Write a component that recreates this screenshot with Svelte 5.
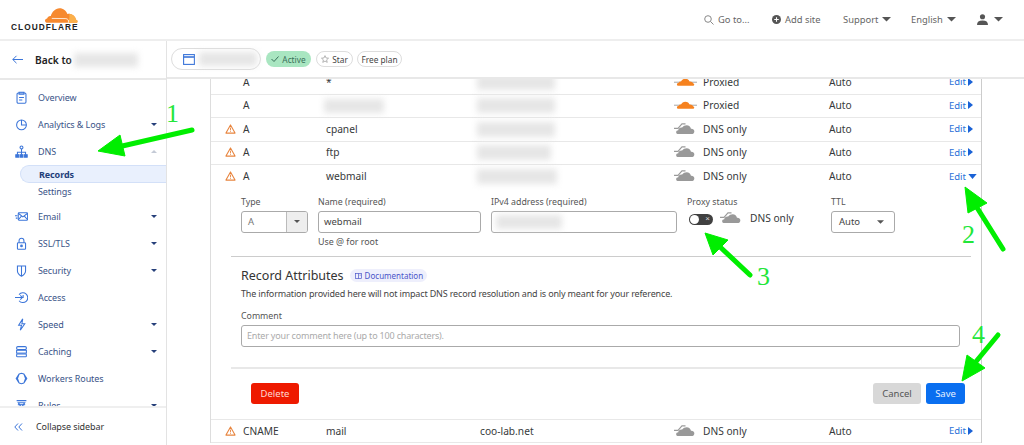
<script>
  const nav = [
    { label: 'Overview', icon: 'overview' },
    { label: 'Analytics & Logs', icon: 'analytics', caret: true },
    { label: 'DNS', icon: 'dns', open: true, sub: ['Records', 'Settings'] },
    { label: 'Email', icon: 'email', caret: true },
    { label: 'SSL/TLS', icon: 'lock', caret: true },
    { label: 'Security', icon: 'shield', caret: true },
    { label: 'Access', icon: 'access' },
    { label: 'Speed', icon: 'speed', caret: true },
    { label: 'Caching', icon: 'caching', caret: true },
    { label: 'Workers Routes', icon: 'workers' },
    { label: 'Rules', icon: 'rules', caret: true }
  ];
  const before = [
    { warn: false, type: 'A', name: '*', proxied: true, c: 78 },
    { warn: false, type: 'A', name: null, proxied: true, c: 78 },
    { warn: true, type: 'A', name: 'cpanel', proxied: false, c: 78 },
    { warn: true, type: 'A', name: 'ftp', proxied: false, c: 74 },
    { warn: true, type: 'A', name: 'webmail', proxied: false, c: 80, open: true }
  ];
  const cloudPath = 'M5 16c-1.4 0-2.6-.9-2.6-2.2 0-1.2 1-2.2 2.4-2.2.3-2.2 2.4-3.4 4.4-2.9C10.600 6.800 12.400 6 14.300 6c2.500 0 4.600 1.700 4.900 4 2-.2 3.800 1 3.800 3 0 1.700-1.400 3-3.300 3z';
</script>

{#snippet cloud(on)}
  <svg class="cloud" viewBox="0 0 26 18" width="23" height="16">
    {#if on}
      <path d="M0 11.500h26" stroke="#9a9a9a" stroke-width="1" />
      <path d="M5 15.500c-1 0-1.700-.7-1.700-1.500s.7-1.500 1.800-1.500c.4-1.300 1.600-2 2.800-1.700C8.800 9 10.600 7.500 12.800 7.500c2.400 0 4.300 1.500 4.700 3.300 1.900-.3 3.600.6 4 2 .9.200 1.400.7 1.400 1.300 0 .8-.7 1.400-1.700 1.400z" fill="#f6821f" />
    {:else}
      <path d="M0 10.500h4.500L9 5.500h4" fill="none" stroke="#9a9a9a" stroke-width="1.300" />
      <path d={cloudPath} fill="#999" transform="translate(0 1)" />
    {/if}
  </svg>
{/snippet}

{#snippet warn()}
  <svg viewBox="0 0 12 11" width="11" height="10">
    <path d="M6 1 11 10H1z" fill="#fff" stroke="#e8853f" stroke-width="1.200" stroke-linejoin="round" />
    <path d="M6 4v3M6 8v.8" stroke="#e8853f" stroke-width="1" />
  </svg>
{/snippet}

{#snippet caretDown(w, color)}
  <svg class="caret" viewBox="0 0 10 5" width={w} height={w / 2}><path d="M0 0h10L5 5z" fill={color} /></svg>
{/snippet}

{#snippet navIcon(name)}
  <svg viewBox="0 0 16 16" width="13" height="13" fill="none" stroke="#3b75d9" stroke-width="1.300">
    {#if name === 'overview'}
      <rect x="2.500" y="2.500" width="11" height="12.500" rx="1.500" /><path d="M5 1.500h6v2.500H5zM5 8h6M5 11h4" />
    {:else if name === 'analytics'}
      <circle cx="8" cy="8.500" r="6" /><path d="M8 2.500v6H14" />
    {:else if name === 'dns'}
      <circle cx="8" cy="3" r="1.800" /><path d="M8 5v4M3 12v-3h10v3M8 9v3" /><rect x="1" y="12" width="3.500" height="3" fill="#3b75d9" /><rect x="6.200" y="12" width="3.500" height="3" fill="#3b75d9" /><rect x="11.500" y="12" width="3.500" height="3" fill="#3b75d9" />
    {:else if name === 'email'}
      <rect x="4" y="3.500" width="11.500" height="9" rx="1" /><path d="M4 4l5.700 4.500L15.500 4M4 12l4-4.500M15.500 12l-4-4.500M0 7h3M1 10h2" />
    {:else if name === 'lock'}
      <rect x="3" y="7" width="10" height="8" rx="1" /><path d="M5 7V4.500a3 3 0 0 1 6 0V7" /><circle cx="8" cy="11" r="1" fill="#3b75d9" />
    {:else if name === 'shield'}
      <path d="M3 2.500h10v6c0 3-2.500 5-5 6.500-2.500-1.500-5-3.500-5-6.500zM8 2.500V15" />
    {:else if name === 'access'}
      <path d="M5 4.500a6 6 0 1 1 0 7.500M0 8h9M6.500 5.500 9 8l-2.500 2.500M10 5v3.500" />
    {:else if name === 'speed'}
      <path d="M9.500 1 4.500 9H8l-1.500 6 5.500-8H8.500z" />
    {:else if name === 'caching'}
      <rect x="2" y="2" width="12" height="3.500" rx="1.500" /><rect x="2" y="6.500" width="12" height="3.500" /><rect x="2" y="11" width="12" height="3.500" rx="1" />
    {:else if name === 'workers'}
      <path d="M5 2.500 1.500 8 5 13.500M11 2.500 14.500 8 11 13.500M5 2.500 8 1.500 11 2.500M5 13.500 8 14.500 11 13.500M5 2.500 3 8 5 13.500M11 2.500 13 8 11 13.500" />
    {:else}
      <path d="M2 2h12M4 4.500h8L9 9v4.500H7V9z" /><path d="M3.500 7h9" />
    {/if}
  </svg>
{/snippet}

<div class="page">
  <header class="top">
    <div class="logo">
      <svg viewBox="0 0 34 17" width="33" height="17">
        <path d="M2.500 16C1 16 0 15 0 13.800c0-1.300 1-2.300 2.200-2.300.5-1.800 2-2.800 3.800-2.500C7 5 10.500 1 15 1c3.800 0 7 2.500 8 6 .8-.3 1.600-.3 2.300-.2 3.700.4 6 2.800 6.700 6.200.8.200 1.500.8 1.500 1.700 0 .7-.5 1.300-1.400 1.300z" fill="#f6892f" />
        <path d="M25 6.800c3.700.4 6.300 2.900 7 6.200.8.200 1.500.8 1.500 1.700 0 .7-.5 1.300-1.400 1.300H24c.8-2.500 1.500-5.500 1-9.200z" fill="#fbb04b" />
        <path d="M24 16c.8-2.500-.3-4-2.500-4.300L7 11.500" fill="none" stroke="#fff" stroke-width=".8" />
      </svg>
      <span>CLOUDFLARE</span>
    </div>
    <nav class="tools">
      <span class="tool goto">
        <svg viewBox="0 0 10 10" width="10" height="10" fill="none" stroke="#888" stroke-width="1"><circle cx="4" cy="4" r="3.300" /><path d="M6.500 6.500 9.500 9.500" /></svg>
        Go to...
      </span>
      <span class="tool add">
        <svg viewBox="0 0 10 10" width="9" height="9"><circle cx="5" cy="5" r="5" fill="#555" /><path d="M5 2.500v5M2.500 5h5" stroke="#fff" stroke-width="1.200" /></svg>
        Add site
      </span>
      <span class="tool support">Support {@render caretDown(9, '#555')}</span>
      <span class="tool english">English {@render caretDown(9, '#555')}</span>
      <span class="tool user">
        <svg viewBox="0 0 12 12" width="11" height="11" fill="#555"><circle cx="6" cy="3" r="2.800" /><path d="M0 12c0-3.500 2-5 6-5s6 1.500 6 5z" /></svg>
        {@render caretDown(9, '#555')}
      </span>
    </nav>
  </header>

  <div class="body">
    <aside class="side">
      <div class="back">
        <svg viewBox="0 0 11 9" width="11" height="9" fill="none" stroke="#3b75d9" stroke-width="1"><path d="M11 4.500H.8M4.500 .8.800 4.500l3.700 3.700" /></svg>
        <b>Back to</b>
        <i class="blur" style="width: 64px; height: 14px"></i>
      </div>
      <div class="items">
        {#each nav as item}
          <div class="item">
            <span class="nav-icon">{@render navIcon(item.icon)}</span>
            <span>{item.label}</span>
            {#if item.caret}
              <svg class="nav-caret" viewBox="0 0 10 5" width="6" height="3"><path d="M0 0h10L5 5z" fill="#27407a" /></svg>
            {:else if item.open}
              <svg class="nav-caret" viewBox="0 0 10 5" width="6" height="3"><path d="M0 5h10L5 0z" fill="#c4cad6" /></svg>
            {/if}
          </div>
          {#if item.sub}
            <div class="sub current">{item.sub[0]}</div>
            <div class="sub">{item.sub[1]}</div>
          {/if}
        {/each}
      </div>
      <div class="collapse">
        <svg viewBox="0 0 9 8" width="9" height="8" fill="none" stroke="#3b75d9" stroke-width="1"><path d="M4 .5.800 4 4 7.500M8 .5 4.800 4 8 7.500" /></svg>
        Collapse sidebar
      </div>
    </aside>

    <main class="main">
      <div class="zonebar">
        <div class="zone">
          <svg viewBox="0 0 12 11" width="12" height="11" fill="none" stroke="#3b75d9" stroke-width="1.100"><rect x=".6" y=".6" width="10.800" height="9.800" /><path d="M.6 3h10.800" stroke-width="1.600" /></svg>
          <i class="blur" style="width: 58px; height: 14px"></i>
        </div>
        <span class="badge active">
          <svg viewBox="0 0 8 6" width="8" height="6" fill="none" stroke="#39705a" stroke-width="1"><path d="M.5 3 3 5.500 7.500 .5" /></svg>
          Active
        </span>
        <span class="badge star">
          <svg viewBox="0 0 10 10" width="8" height="8" fill="none" stroke="#999" stroke-width=".9"><path d="M5 .8 6.300 3.700 9.400 4 7 6.100 7.800 9.200 5 7.600 2.200 9.200 3 6.100.6 4 3.700 3.700z" /></svg>
          Star
        </span>
        <span class="badge plan">Free plan</span>
      </div>

      <div class="scroll">
        <div class="table">
          {#each before as r}
            <div class="row" class:open={r.open}>
              <span class="warn">{#if r.warn}{@render warn()}{/if}</span>
              <span>{r.type}</span>
              <span>{#if r.name}{r.name}{:else}<i class="blur name-blur" style="width: 60px; height: 14px"></i>{/if}</span>
              <span><i class="blur val-blur" style="width: {r.c}px; height: 15px"></i></span>
              <span class="cl">{@render cloud(r.proxied)}</span>
              <span>{r.proxied ? 'Proxied' : 'DNS only'}</span>
              <span>Auto</span>
              <span class="edit">
                Edit
                {#if r.open}
                  <svg viewBox="0 0 10 6" width="9" height="5"><path d="M0 0h10L5 6z" fill="#1a62d6" /></svg>
                {:else}
                  <svg viewBox="0 0 5 8" width="5" height="8"><path d="M0 0l5 4-5 4z" fill="#1a62d6" /></svg>
                {/if}
              </span>
            </div>
          {/each}

          <section class="editor">
            <div class="fields">
              <div class="f-type">
                <label for="t">Type</label>
                <div class="select" id="t"><span>A</span><b><svg viewBox="0 0 10 5" width="6" height="3"><path d="M0 0h10L5 5z" fill="#555" /></svg></b></div>
              </div>
              <div class="f-name">
                <label for="n">Name (required)</label>
                <div class="input" id="n">webmail</div>
                <small>Use @ for root</small>
              </div>
              <div class="f-ip">
                <label for="i">IPv4 address (required)</label>
                <div class="input" id="i"><i class="blur" style="width: 66px; height: 14px"></i></div>
              </div>
              <div class="f-proxy">
                <span class="lab">Proxy status</span>
                <div class="proxy-row">
                  <span class="toggle"><span class="knob"></span><span class="x">×</span></span>
                  <span class="cl2">{@render cloud(false)}</span>
                  <span class="only">DNS only</span>
                </div>
              </div>
              <div class="f-ttl">
                <label for="ttl">TTL</label>
                <div class="input ttl" id="ttl"><span>Auto</span><svg viewBox="0 0 10 5" width="7" height="4"><path d="M0 0h10L5 5z" fill="#555" /></svg></div>
              </div>
            </div>

            <hr class="rule" />

            <div class="attrs">
              <div class="attr-head">
                <h2>Record Attributes</h2>
                <span class="doc">
                  <svg viewBox="0 0 8 7" width="7" height="6" fill="none" stroke="#4a55c9" stroke-width=".8"><rect x=".5" y=".5" width="7" height="6" /><path d="M4 .5v6M5.300 2.500h1.300" /></svg>
                  Documentation
                </span>
              </div>
              <p>The information provided here will not impact DNS record resolution and is only meant for your reference.</p>
              <label for="c">Comment</label>
              <div class="input comment" id="c">Enter your comment here (up to 100 characters).</div>
            </div>

            <hr class="rule thick" />

            <div class="actions">
              <button class="btn del">Delete</button>
              <span class="grow"></span>
              <button class="btn cancel">Cancel</button>
              <button class="btn save">Save</button>
            </div>
          </section>

          <div class="row last">
            <span class="warn">{@render warn()}</span>
            <span>CNAME</span>
            <span>mail</span>
            <span>coo-lab.net</span>
            <span class="cl">{@render cloud(false)}</span>
            <span>DNS only</span>
            <span>Auto</span>
            <span class="edit">Edit <svg viewBox="0 0 5 8" width="5" height="8"><path d="M0 0l5 4-5 4z" fill="#1a62d6" /></svg></span>
          </div>
        </div>
      </div>
    </main>
  </div>

  <svg class="notes" viewBox="0 0 1024 445" width="1024" height="445">
    <g fill="#00ee00" stroke="#00ee00">
      <path d="M192 130 118 147" stroke-width="5" stroke-linecap="round" />
      <path d="M98 151 120 135 125 156z" />
      <path d="M1003 249 976 206" stroke-width="5" stroke-linecap="round" />
      <path d="M965 187 987 203 968 213z" />
      <path d="M750 275 718 245" stroke-width="5" stroke-linecap="round" />
      <path d="M705 233 728 240 713 255z" />
      <path d="M998 335 974 364" stroke-width="5" stroke-linecap="round" />
      <path d="M962 381 967 355 985 368z" />
    </g>
    <g class="num" fill="#22e63a">
      <text x="166" y="122">1</text>
      <text x="962" y="243">2</text>
      <text x="757" y="285">3</text>
      <text x="972" y="343">4</text>
    </g>
  </svg>
</div>

<style>
  :global(body) { margin: 0; background: #fff; }
  .page { position: relative; width: 1024px; height: 445px; overflow: hidden; font-family: "Noto Sans", sans-serif; font-size: 10.500px; color: #36393a; background: #fff; }
  .blur { display: inline-block; background: #e6e6e6; filter: blur(3px); vertical-align: middle; }

  .top { height: 39px; display: flex; align-items: center; justify-content: space-between; border-bottom: 2px solid #eeeeee; }
  .logo { position: relative; width: 90px; height: 39px; }
  .logo svg { position: absolute; left: 45px; top: 7px; }
  .logo span { position: absolute; left: 11px; top: 22px; font: 700 8.300px/10px "Liberation Sans", sans-serif; letter-spacing: 1.050px; color: #222; }
  .tools { display: flex; align-items: center; font-size: 9.400px; color: #666; }
  .tool { display: flex; align-items: center; gap: 4px; }
  .goto { width: 68px; }
  .add { width: 71px; }
  .support { width: 68px; gap: 4px; }
  .english { width: 66px; gap: 4px; }
  .user { width: 47px; gap: 6px; }

  .body { display: grid; grid-template-columns: 167px 1fr; height: 404px; }
  .side { display: flex; flex-direction: column; border-right: 1px solid #e3e3e3; height: 404px; min-width: 0; font-size: 9px; letter-spacing: -0.1px; }
  .back { height: 37px; flex: none; display: flex; align-items: center; padding-left: 12px; border-bottom: 2px solid #e8e8e8; }
  .back b { margin: 0 2px 0 12px; font-size: 10.200px; font-weight: 600; color: #222; white-space: nowrap; letter-spacing: 0; }
  .items { flex: 1; overflow: hidden; padding-top: 3.500px; min-height: 0; }
  .item { position: relative; height: 27px; display: flex; align-items: center; color: #3a5488; }
  .nav-icon { width: 38px; padding-left: 15px; box-sizing: border-box; display: flex; flex: none; }
  .nav-caret { position: absolute; left: 151px; top: 12px; }
  .sub { height: 18px; line-height: 17px; padding-left: 18px; margin-left: 20px; color: #3a5488; box-sizing: border-box; }
  .current { margin-top: 0; font-weight: 700; color: #1f3f7a; background: #e9f0fd; border: 1px solid #d3e0f8; border-right: 0; border-radius: 9px 0 0 9px; }
  .sub:not(.current) { margin-bottom: 2.500px; }
  .collapse { flex: none; height: 37px; border-top: 2px solid #efefef; display: flex; align-items: center; gap: 13px; padding-left: 14px; color: #333; }

  .main { min-width: 0; }
  .zonebar { height: 38px; box-sizing: border-box; border-bottom: 2px solid #e8e8e8; display: flex; align-items: center; padding: 0 0 0 4px; }
  .zone { width: 90px; height: 22px; box-sizing: border-box; border: 1px solid #ddd; border-radius: 11px; display: flex; align-items: center; gap: 4px; padding-left: 11px; margin-right: 5px; }
  .badge { height: 16px; box-sizing: border-box; border-radius: 8px; display: inline-flex; align-items: center; justify-content: center; gap: 3px; font-size: 8.300px; color: #444; }
  .active { width: 45px; background: #a9e6c1; margin-right: 5px; color: #39705a; }
  .star { width: 37px; border: 1px solid #ddd; margin-right: 4px; }
  .plan { width: 45px; border: 1px solid #ddd; }
  .scroll { height: 366px; overflow: hidden; }
  .table { width: 772px; margin: -8px 0 0 43px; box-sizing: border-box; border-left: 1px solid #ddd; border-right: 1px solid #ccc; }

  .row { height: 23.500px; display: grid; grid-template-columns: 32px 83px 154px 195px 28px 126px 120px 1fr; align-items: center; border-bottom: 1.500px solid #e8e8e8; padding-bottom: 1px; font-size: 10.200px; box-sizing: border-box; white-space: nowrap; }
  .row.open { border-bottom: 0; }
  .row.last { padding-bottom: 0; }
  .warn { display: flex; padding-left: 14px; }
  .cl { display: flex; margin-left: -1px; padding-bottom: 4px; }
  .edit { display: flex; align-items: center; gap: 2px; color: #2a70d8; font-size: 9.500px; }
  .name-blur { margin-left: -2px; }
  .val-blur { margin-left: -3px; }

  .editor { height: 231px; box-sizing: border-box; border-bottom: 1.500px solid #e8e8e8; }
  label, .lab { display: block; font-size: 8.800px; color: #555; line-height: 12px; margin-bottom: 3px; }
  .fields { display: flex; height: 67px; padding: 7px 0 0 30px; box-sizing: border-box; }
  .input, .select { height: 22px; box-sizing: border-box; border: 1px solid #aaa; border-radius: 3px; display: flex; align-items: center; font-size: 9.500px; color: #444; padding-left: 5px; }
  .f-type { width: 77px; }
  .select { width: 67px; color: #777; padding-left: 6px; justify-content: space-between; padding-right: 0; overflow: hidden; }
  .select b { width: 20px; height: 100%; background: #eee; border-left: 1px solid #bbb; display: flex; align-items: center; justify-content: center; }
  .f-name { width: 173px; }
  .f-name .input { width: 163px; }
  small { display: block; font-size: 8.900px; color: #555; margin-top: 2px; }
  .f-ip { width: 196px; }
  .f-ip .input { width: 186px; padding-left: 4px; }
  .f-proxy { width: 144px; }
  .proxy-row { display: flex; align-items: center; font-size: 10.200px; margin-top: -2px; height: 22px; }
  .toggle { position: relative; width: 24px; height: 11px; background: #404040; border-radius: 6px; margin-left: 2px; }
  .knob { position: absolute; left: 1px; top: 1px; width: 9px; height: 9px; border-radius: 50%; background: #fff; }
  .x { position: absolute; right: 3px; top: 0; font: 8px/10px "Liberation Sans", sans-serif; color: #ddd; }
  .cl2 { display: flex; margin: 0 7px 7px 7px; }
  .only { padding-bottom: 3px; }
  .ttl { width: 64px; justify-content: space-between; padding: 0 10px 0 7px; }

  .rule { margin: 0 10px 0 20px; border: 0; height: 1px; background: #ccc; }
  .rule.thick { height: 2px; background: #e8e8e8; }
  .attrs { padding: 12px 20px 20px 30px; height: 110px; box-sizing: border-box; }
  .attr-head { display: flex; align-items: center; gap: 6px; height: 14px; }
  h2 { margin: 0; font-size: 12.500px; font-weight: 400; color: #333; }
  .doc { height: 13px; width: 77px; box-sizing: border-box; padding-left: 5px; background: #eeeffc; color: #4a55c9; border-radius: 7px; font-size: 8px; display: flex; align-items: center; gap: 3px; }
  p { margin: 4px 0 10px; font-size: 9px; letter-spacing: -0.160px; line-height: 13px; color: #444; white-space: nowrap; }
  .comment { width: 719px; margin-top: 0; color: #aaa; font-size: 9px; letter-spacing: -0.180px; }
  .actions { display: flex; align-items: center; gap: 5px; padding: 14px 16px 0 40px; }
  .grow { flex: 1; }
  .btn { height: 21px; box-sizing: border-box; border: 0; border-radius: 3px; font: 9.500px "Noto Sans", sans-serif; padding: 0; }
  .del { width: 48px; background: #ee1a00; color: #ffd9d2; }
  .cancel { width: 48px; background: #d8d8d8; color: #555; }
  .save { width: 39px; background: #0a6ff0; color: #e5f0ff; }

  .notes { position: absolute; left: 0; top: 0; pointer-events: none; }
  .num text { font: 26px "Liberation Serif", serif; }
</style>
